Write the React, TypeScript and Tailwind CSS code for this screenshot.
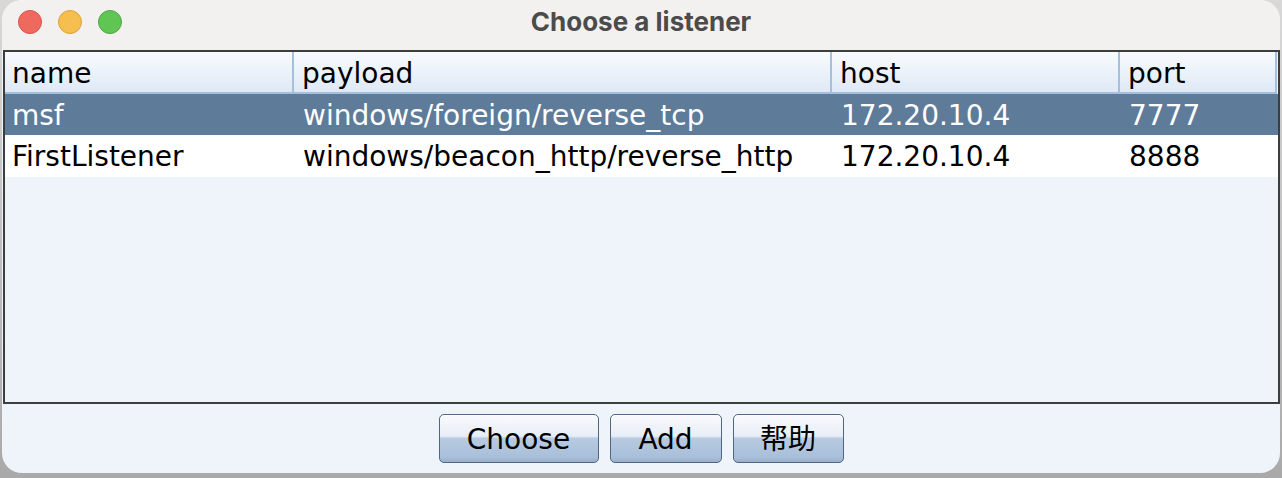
import React from "react";

const rows = [
  { name: "msf", payload: "windows/foreign/reverse_tcp", host: "172.20.10.4", port: "7777" },
  { name: "FirstListener", payload: "windows/beacon_http/reverse_http", host: "172.20.10.4", port: "8888" },
];

const cols = ["w-[289px]", "w-[538px]", "w-[288px]", "flex-1"];

const Button = ({ label, width }: { label: string; width: string }) => (
  <button
    type="button"
    className={`${width} h-[49px] rounded-[5px] border border-[#4f6781] bg-[linear-gradient(#f8fafd_0%,#e8eef6_45%,#b7cae0_50%,#a9bfd9_90%,#98b0cc_100%)] shadow-[inset_0_1px_0_#ffffff] text-[28px] text-black leading-none flex items-center justify-center pt-[3px]`}
  >
    {label}
  </button>
);

export default function App() {
  return (
    <div className="w-[1282px] h-[478px] bg-[linear-gradient(#d8d8d8,#a9a9a9)] font-['DejaVu_Sans','Noto_Sans_CJK_SC',sans-serif]">
      <div className="ml-[2px] w-[1278px] h-[473px] rounded-[20px] bg-[#eff3fa] overflow-hidden flex flex-col">
        {/* title bar */}
        <div className="relative h-[50px] shrink-0 bg-[#f2f1ef] flex items-center justify-center">
          <div className="absolute left-[16px] top-[10px] flex gap-[16px]">
            <span className="w-[24px] h-[24px] rounded-full bg-[#ee6a5e] border border-[#d5544a]" />
            <span className="w-[24px] h-[24px] rounded-full bg-[#f5be4f] border border-[#d9a23c]" />
            <span className="w-[24px] h-[24px] rounded-full bg-[#61c554] border border-[#4ea843]" />
          </div>
          <span className="text-[26px] font-bold text-[#4b4b4b] font-['Inter',sans-serif] -mt-[8px]">
            Choose a listener
          </span>
        </div>

        {/* table */}
        <div className="h-[354px] shrink-0 ml-[1px] border-2 border-[#3d3d3d] bg-[#eff3fa] flex flex-col">
          <div className="h-[42px] flex bg-[linear-gradient(#f8fbfe,#dfe9f5)] border-b-2 border-[#a5c0dc] mr-[1px] border-r-2 border-r-[#a5c0dc]">
            {["name", "payload", "host", "port"].map((h, i) => (
              <div
                key={h}
                className={`${cols[i]} ${i < 3 ? "border-r-2 border-[#a5c0dc]" : ""} ${i > 0 ? "pl-[8px]" : "pl-[7px]"} pt-[3px] flex items-center text-[28px] text-black`}
              >
                {h}
              </div>
            ))}
          </div>
          {rows.map((r, ri) => (
            <div
              key={r.name}
              className={`flex ${ri === 0 ? "h-[41px] bg-[#5e7b99] text-white" : "h-[42px] bg-white text-black"} text-[28px]`}
            >
              {[r.name, r.payload, r.host, r.port].map((c, i) => (
                <div key={i} className={`${cols[i]} ${i > 0 ? "pl-[9px]" : "pl-[7px]"} pt-[2px] flex items-center`}>
                  {c}
                </div>
              ))}
            </div>
          ))}
        </div>

        {/* buttons */}
        <div className="flex-1 flex items-center justify-center gap-[11px] pb-[1px]">
          <Button label="Choose" width="w-[160px]" />
          <Button label="Add" width="w-[112px]" />
          <Button label="帮助" width="w-[111px]" />
        </div>
      </div>
    </div>
  );
}
